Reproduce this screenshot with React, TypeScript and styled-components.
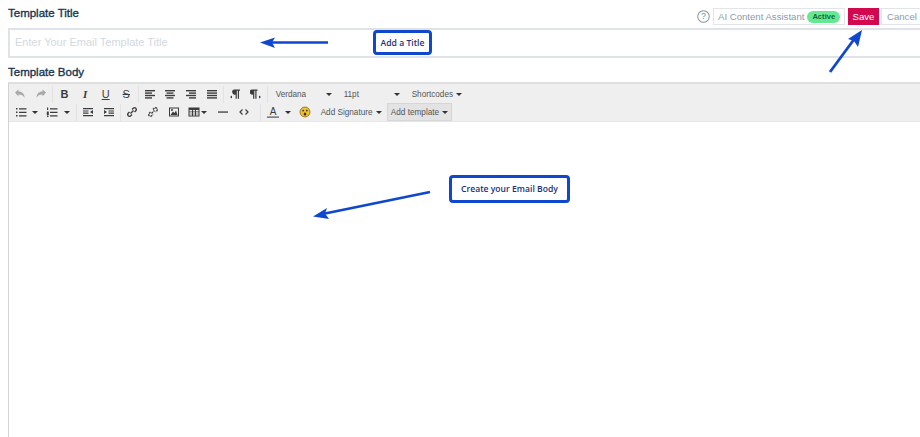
import React from "react";
import styled, { createGlobalStyle } from "styled-components";

const Global = createGlobalStyle`
  html, body { margin: 0; padding: 0; background: #fff; }
  body { font-family: "Liberation Sans", Arial, sans-serif; }
`;

const Page = styled.div`
  position: relative;
  width: 920px;
  height: 437px;
  overflow: hidden;
  padding: 8px 0 0 8px;
  box-sizing: border-box;
  display: flex;
  flex-direction: column;
`;
const TitleRow = styled.div`
  display: flex;
  align-items: flex-start;
  justify-content: space-between;
  height: 18px;
`;
const Label = styled.div`
  font-size: 11.5px;
  line-height: 11px;
  color: #17344f;
  -webkit-text-stroke: 0.35px #17344f;
`;
const Actions = styled.div`
  display: flex;
  align-items: flex-start;
  height: 18px;
`;
const Help = styled.svg`
  width: 13px;
  height: 13px;
  margin: 2px 3px 0 0;
`;
const AssistantButton = styled.div`
  display: flex;
  align-items: center;
  box-sizing: border-box;
  height: 17px;
  width: 132px;
  padding-left: 4px;
  border: 1px solid #e1e5ea;
  font-size: 9.6px;
  white-space: nowrap;
  color: #8a9bad;
  margin-right: 3px;
`;
const Badge = styled.span`
  margin-left: 3px;
  background: #66e892;
  color: #0f6a35;
  font-size: 7.6px;
  font-weight: 700;
  border-radius: 6px;
  padding: 0 5px;
  height: 12px;
  line-height: 12px;
`;
const SaveButton = styled.div`
  box-sizing: border-box;
  width: 31px;
  height: 17px;
  background: #d3074f;
  color: #fff;
  font-size: 9.6px;
  line-height: 17px;
  text-align: center;
  margin-right: 2px;
`;
const CancelButton = styled.div`
  box-sizing: border-box;
  width: 39px;
  height: 17px;
  border: 1px solid #e1e5ea;
  border-right: 0;
  color: #8a9bad;
  font-size: 9.6px;
  line-height: 15px;
  padding-left: 5px;
  white-space: nowrap;
`;
const TitleInput = styled.div`
  box-sizing: border-box;
  height: 30px;
  margin-top: 2px;
  margin-right: -4px;
  border: 2px solid #dfe3e8;
  padding-left: 5px;
  font-size: 11px;
  line-height: 24px;
  color: #d3d9e0;
`;
const BodyLabel = styled(Label)`
  margin-top: 9px;
`;
const Editor = styled.div`
  flex: 1;
  margin-top: 4px;
  margin-right: -4px;
  border: 2px solid #dfdfdf;
  border-left: 1px solid #d2d2d2;
  border-bottom: 0;
  display: flex;
  flex-direction: column;
`;
const Toolbar = styled.div`
  background: #efefef;
  height: 36px;
  border-bottom: 1px solid #e6e6e6;
  padding: 1px 0 0 1px;
  box-sizing: content-box;
`;
const ToolRow = styled.div`
  display: flex;
  align-items: center;
  height: 18px;
`;
const Sep = styled.span<{ $ml?: number }>`
  width: 1px;
  height: 17px;
  background: #e2e2e2;
  margin: 0 1px 0 ${(p) => p.$ml ?? 1}px;
  flex: none;
`;
const Tool = styled.span<{ $w?: number }>`
  width: ${(p) => p.$w ?? 20.6}px;
  height: 18px;
  flex: none;
  display: flex;
  align-items: center;
  justify-content: center;
`;
const Caret = styled.i<{ $ml?: number; $mr?: number }>`
  display: inline-block;
  flex: none;
  width: 0;
  height: 0;
  border-left: 3px solid transparent;
  border-right: 3px solid transparent;
  border-top: 3px solid #333;
  margin-left: ${(p) => p.$ml ?? 0}px;
  margin-right: ${(p) => p.$mr ?? 0}px;
`;
const Menu = styled.span<{ $w?: number; $ml?: number; $active?: boolean }>`
  display: flex;
  align-items: center;
  flex: none;
  box-sizing: border-box;
  height: 18px;
  width: ${(p) => (p.$w ? p.$w + "px" : "auto")};
  margin-left: ${(p) => p.$ml ?? 0}px;
  padding: 0 ${(p) => (p.$active ? "3px" : "0")};
  font-size: 8.2px;
  white-space: nowrap;
  color: #555;
  background: ${(p) => (p.$active ? "#e3e3e3" : "transparent")};
  border: ${(p) => (p.$active ? "1px solid #d6d6d6" : "0")};
  justify-content: ${(p) => (p.$w ? "space-between" : "flex-start")};
`;
const Canvas = styled.div`
  flex: 1;
  background: #fff;
`;
const ArrowLayer = styled.svg`
  position: absolute;
  inset: 0;
  pointer-events: none;
`;
const Callout = styled.div<{ $x: number; $y: number; $w: number; $h: number }>`
  position: absolute;
  left: ${(p) => p.$x}px;
  top: ${(p) => p.$y}px;
  width: ${(p) => p.$w}px;
  height: ${(p) => p.$h}px;
  box-sizing: border-box;
  border: 3px solid #0f47cf;
  border-radius: 4px;
  background: #fff;
  display: flex;
  align-items: center;
  justify-content: center;
  font-family: "Open Sans", sans-serif;
  font-size: 8.6px;
  font-weight: 600;
  color: #1c2f7a;
`;
const Glyph = styled.span<{ $serif?: boolean; $italic?: boolean; $bold?: boolean; $deco?: string }>`
  font-family: ${(p) => (p.$serif ? '"Liberation Serif"' : '"Liberation Sans"')}, serif;
  font-size: 11px;
  line-height: 12px;
  font-weight: ${(p) => (p.$bold ? 700 : 400)};
  font-style: ${(p) => (p.$italic ? "italic" : "normal")};
  text-decoration: ${(p) => p.$deco ?? "none"};
  color: #3c3c3c;
`;

const Ico = ({ children, w = 12, h = 12, vb = "0 0 12 12" }: { children: React.ReactNode; w?: number; h?: number; vb?: string }) => (
  <svg width={w} height={h} viewBox={vb} fill="#3c3c3c">{children}</svg>
);
const Lines = ({ rows }: { rows: [number, number][] }) => (
  <Ico>
    {rows.map(([x, w], i) => (
      <rect key={i} x={x} y={2 + i * 2.4} width={w} height={1.4} />
    ))}
  </Ico>
);

export default function App() {
  return (
    <Page>
      <Global />
      <TitleRow>
        <Label>Template Title</Label>
        <Actions>
          <Help viewBox="0 0 14 14">
            <circle cx="7" cy="7" r="6.2" fill="none" stroke="#8295a8" strokeWidth="1.1" />
            <text x="7" y="10.2" textAnchor="middle" fontSize="9.5" fill="#72879b" fontFamily="Liberation Sans">?</text>
          </Help>
          <AssistantButton>
            AI Content Assistant<Badge>Active</Badge>
          </AssistantButton>
          <SaveButton>Save</SaveButton>
          <CancelButton>Cancel</CancelButton>
        </Actions>
      </TitleRow>
      <TitleInput>Enter Your Email Template Title</TitleInput>
      <BodyLabel>Template Body</BodyLabel>
      <Editor>
        <Toolbar>
          <ToolRow>
            <Tool><Ico><path d="M1 4.5 4.5 1.500v2c4 0 6 2.500 6 6.500-1-2.500-3-3.500-6-3.500v2z" fill="#a9a9a9" /></Ico></Tool>
            <Tool><Ico><path d="M11 4.5 7.500 1.500v2c-4 0-6 2.500-6 6.500 1-2.500 3-3.500 6-3.500v2z" fill="#a9a9a9" /></Ico></Tool>
            <Sep />
            <Tool><Glyph $bold>B</Glyph></Tool>
            <Tool><Glyph $serif $italic $bold>I</Glyph></Tool>
            <Tool><Glyph $deco="underline">U</Glyph></Tool>
            <Tool><Glyph $deco="line-through">S</Glyph></Tool>
            <Sep />
            <Tool><Lines rows={[[1, 10], [1, 7], [1, 10], [1, 7]]} /></Tool>
            <Tool><Lines rows={[[1, 10], [2.5, 7], [1, 10], [2.5, 7]]} /></Tool>
            <Tool><Lines rows={[[1, 10], [4, 7], [1, 10], [4, 7]]} /></Tool>
            <Tool><Lines rows={[[1, 10], [1, 10], [1, 10], [1, 10]]} /></Tool>
            <Sep />
            <Tool><Ico><path d="M5 1.500h6v1.200h-1v8h-1.200v-8h-1v8H6.600V6.500A2.500 2.500 0 0 1 5 1.500zM1 9l2 -1.500v3z" /></Ico></Tool>
            <Tool><Ico><path d="M1.500 1.500h6v1.200h-1v8H5.300v-8h-1v8H3.100V6.500A2.500 2.500 0 0 1 1.500 1.500zM11 9l-2 -1.500v3z" /></Ico></Tool>
            <Sep />
            <Menu $w={56} $ml={6.5}>Verdana<Caret /></Menu>
            <Menu $w={56} $ml={12}>11pt<Caret /></Menu>
            <Menu $ml={12}>Shortcodes<Caret $ml={3} /></Menu>
          </ToolRow>
          <ToolRow>
            <Tool $w={22}>
              <Ico>
                <path d="M1 2h1.500v1.500H1zM1 5.500h1.500V7H1zM1 9h1.500v1.500H1zM4 2.200h7.500v1.200H4zM4 5.700h7.500v1.200H4zM4 9.200h7.500v1.200H4z" />
              </Ico>
            </Tool>
            <Caret $mr={5} />
            <Tool $w={18}>
              <Ico>
                <path d="M1 1.500h1.200v2.500H1zM.8 5.500h2v3.500h-2zM1 9.500h1.500v1.500H1zM4 2.200h7.500v1.200H4zM4 5.700h7.500v1.200H4zM4 9.200h7.500v1.200H4z" />
              </Ico>
            </Tool>
            <Caret $ml={3} $mr={5} />
            <Sep $ml={1} />
            <Tool><Ico><path d="M1 2h10v1.300H1zM1 4.400h5.500v1.200H1zM1 6.600h5.500v1.200H1zM1 9h10v1.300H1zM11 4v4L8 6z" /></Ico></Tool>
            <Tool><Ico><path d="M1 2h10v1.300H1zM5.500 4.400H11v1.200H5.500zM5.500 6.600H11v1.200H5.500zM1 9h10v1.300H1zM1 4v4L4 6z" /></Ico></Tool>
            <Sep />
            <Tool>
              <Ico><path d="M4.500 7.500l3-3M3.500 6 2 7.500a1.800 1.800 0 0 0 2.500 2.500L6 8.500M6 3.500 7.500 2A1.800 1.800 0 0 1 10 4.500L8.500 6" fill="none" stroke="#3c3c3c" strokeWidth="1.4" /></Ico>
            </Tool>
            <Tool>
              <Ico><path d="M4.500 7.500l3-3M3.500 6 2 7.500a1.800 1.800 0 0 0 2.500 2.500L6 8.500M6 3.500 7.500 2A1.800 1.800 0 0 1 10 4.500L8.500 6" fill="none" stroke="#3c3c3c" strokeWidth="1.4" strokeDasharray="2 .8" /></Ico>
            </Tool>
            <Tool>
              <Ico><path fillRule="evenodd" d="M1 1.500h10v9H1zM2 2.500v7h8v-7z" /><path d="M2.500 9l2.500-3.500 1.500 1.500 1.500-2.500L9.500 9z" /><circle cx="4" cy="4" r="1" /></Ico>
            </Tool>
            <Tool $w={20}>
              <Ico><path fillRule="evenodd" d="M.5 1.500h11v9H.5zM1.500 4v1.500h2.500V4zM5 4v1.500h2V4zM8 4v1.500h2.500V4zM1.500 6.300v1.400h2.500V6.300zM5 6.300v1.400h2V6.300zM8 6.300v1.400h2.500V6.300zM1.500 8.300v1.300h2.500V8.300zM5 8.300v1.300h2V8.300zM8 8.300v1.300h2.500V8.300z" /></Ico>
            </Tool>
            <Caret $ml={-3} $mr={6} />
            <Tool><Ico><rect x="1" y="5.400" width="10" height="1.300" /></Ico></Tool>
            <Tool>
              <Ico><path d="M4.500 3.500 2 6l2.500 2.500M7.500 3.500 10 6 7.500 8.500" fill="none" stroke="#3c3c3c" strokeWidth="1.200" /></Ico>
            </Tool>
            <Sep $ml={5.8} />
            <Tool $w={22}>
              <Ico h={14} vb="0 0 12 14"><text x="6" y="9.5" textAnchor="middle" fontSize="10" fill="#3c3c3c" fontFamily="Liberation Sans">A</text><rect x="0" y="11.5" width="12" height="1.2" fill="#555" /></Ico>
            </Tool>
            <Caret $ml={1} $mr={3} />
            <Tool $w={22}>
              <Ico>
                <circle cx="6" cy="6" r="5" fill="#f0c02b" stroke="#7a5a10" strokeWidth=".7" />
                <circle cx="4.200" cy="4.600" r=".9" fill="#333" />
                <circle cx="7.800" cy="4.600" r=".9" fill="#333" />
                <ellipse cx="6" cy="8" rx="1.300" ry="1.600" fill="#4a2a0a" />
              </Ico>
            </Tool>
            <Menu $ml={4.7}>Add Signature<Caret $ml={3} /></Menu>
            <Menu $ml={5.3} $w={65} $active>Add template<Caret /></Menu>
          </ToolRow>
        </Toolbar>
        <Canvas />
      </Editor>
      <Callout $x={373} $y={30} $w={59} $h={25}>Add a Title</Callout>
      <Callout $x={449} $y={175} $w={121} $h={28}>Create your Email Body</Callout>
      <ArrowLayer width="920" height="437" viewBox="0 0 920 437">
        <path d="M328 42.500H272" stroke="#0f47cf" strokeWidth="2.600" fill="none" />
        <path d="M260 42.500 275 37.500 272 42.500 275 48z" fill="#0f47cf" />
        <path d="M430 192 325 213.500" stroke="#0f47cf" strokeWidth="2.800" fill="none" />
        <path d="M313 216.500 327 208 325 213.500 329 219z" fill="#0f47cf" />
        <path d="M830 72 855 38" stroke="#0f47cf" strokeWidth="2.800" fill="none" />
        <path d="M862 30 858 47 854 41 848 39z" fill="#0f47cf" />
      </ArrowLayer>
    </Page>
  );
}
